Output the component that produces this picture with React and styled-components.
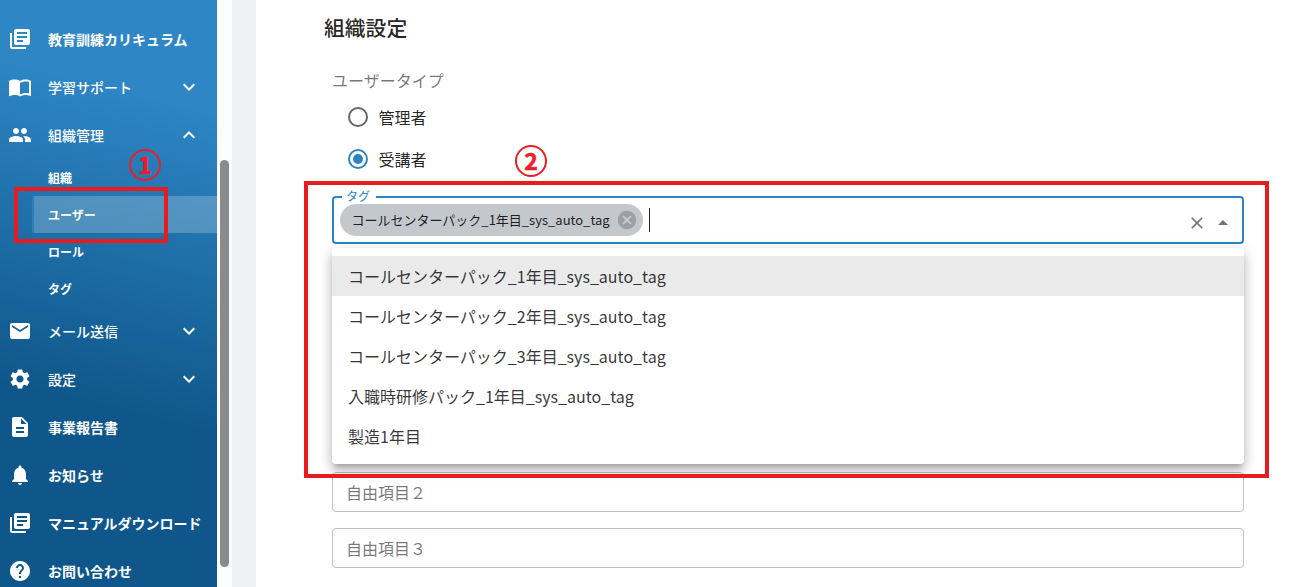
import React from 'react';
import styled, { createGlobalStyle, css } from 'styled-components';
import {
  MdLibraryBooks,
  MdImportContacts,
  MdPeople,
  MdEmail,
  MdSettings,
  MdDescription,
  MdNotifications,
  MdHelp,
  MdExpandMore,
  MdExpandLess,
  MdCancel,
  MdClose,
  MdArrowDropUp,
} from 'react-icons/md';

const BLUE = '#2d84c4';
const RED = '#e81c1e';

const GlobalStyle = createGlobalStyle`
  * { box-sizing: border-box; }
  body {
    margin: 0;
    overflow: hidden;
    background: #fff;
    font-family: "Noto Sans CJK JP", "Noto Sans", sans-serif;
    color: rgba(0, 0, 0, 0.87);
  }
  svg { display: block; flex-shrink: 0; }
`;

const Page = styled.div`
  position: relative;
  display: flex;
  height: 587px;
  overflow: hidden;
`;

const Sidebar = styled.nav`
  width: 217px;
  flex-shrink: 0;
  padding-top: 15px;
  overflow: hidden;
  color: #fff;
  background: linear-gradient(194deg, #2e86c5 17%, #0f578a 68%);
`;

const NavItem = styled.div`
  display: flex;
  align-items: center;
  height: 48px;
  padding: 0 16px 0 8px;
`;

const NavLabel = styled.span`
  flex: 1;
  margin-left: 16px;
  font-size: 14px;
  line-height: 20px;
  font-weight: ${(p) => (p.$bold ? 700 : 500)};
  white-space: nowrap;
`;

const SubItem = styled.div`
  display: flex;
  align-items: center;
  height: 37px;
  margin-left: 32px;
  padding-left: 14px;
  border-left: 2px solid transparent;
  font-size: 12px;
  line-height: 18px;
  font-weight: 700;
  ${(p) =>
    p.$selected &&
    css`
      border-left-color: #2a7fbf;
      background: rgba(255, 255, 255, 0.22);
      background-clip: padding-box;
    `}
`;

const ScrollTrack = styled.div`
  width: 15px;
  flex-shrink: 0;
  padding: 160px 3px 0;
  background: #fcfcfc;
`;

const ScrollThumb = styled.div`
  width: 9px;
  height: 407px;
  border-radius: 5px;
  background: #8b8b8b;
`;

const Gutter = styled.div`
  width: 24px;
  flex-shrink: 0;
  background: #eff0f2;
`;

const Main = styled.main`
  flex: 1;
  padding: 11px 67px 0 68px;
`;

const Title = styled.h2`
  margin: 0;
  height: 32px;
  font-size: 20.8px;
  line-height: 32px;
  font-weight: 500;
`;

const Form = styled.div`
  display: flex;
  flex-direction: column;
  padding-left: 8px;
`;

const GroupLabel = styled.div`
  margin-top: 25px;
  height: 24px;
  font-size: 16px;
  line-height: 24px;
  color: rgba(0, 0, 0, 0.55);
`;

const RadioRow = styled.label`
  display: flex;
  align-items: center;
  gap: 10.5px;
  height: 42px;
  padding-left: 16px;
  font-size: 16px;
  &:first-of-type { margin-top: 4px; }
`;

const RadioText = styled.span`
  line-height: 24px;
`;

const Radio = styled.span`
  display: flex;
  align-items: center;
  justify-content: center;
  width: 20px;
  height: 20px;
  border: 2px solid ${(p) => (p.$checked ? BLUE : '#666')};
  border-radius: 50%;
  &::after {
    content: '';
    width: 10px;
    height: 10px;
    border-radius: 50%;
    background: ${(p) => (p.$checked ? BLUE : 'transparent')};
  }
`;

const TagField = styled.div`
  position: relative;
  display: flex;
  align-items: center;
  height: 48px;
  margin-top: 16px;
  padding: 0 7px 0 6px;
  border: 2px solid ${BLUE};
  border-radius: 4px;
`;

const FloatingLabel = styled.span`
  position: absolute;
  top: -10px;
  left: 8px;
  padding: 0 6px 0 4px;
  background: #fff;
  color: ${BLUE};
  font-size: 12px;
  line-height: 16px;
`;

const Chip = styled.span`
  display: flex;
  align-items: center;
  height: 32px;
  padding: 0 5px 0 11.5px;
  border-radius: 16px;
  background: #c4c8cd;
  font-size: 13px;
  line-height: 20px;
  white-space: nowrap;
`;

const ChipText = styled.span`
  padding-bottom: 1px;
`;

const ChipIcon = styled.span`
  margin-left: 6.5px;
  color: #9d9fa3;
  background: radial-gradient(circle, #c9ccd0 50%, transparent 52%);
`;

const Caret = styled.span`
  width: 1px;
  height: 24px;
  margin-left: 6px;
  background: #222;
`;

const FieldActions = styled.span`
  display: flex;
  align-items: center;
  gap: 4px;
  margin-left: auto;
  padding-top: 6px;
  color: #757575;
`;

const Menu = styled.ul`
  position: absolute;
  top: 50px;
  left: -2px;
  right: -2px;
  z-index: 2;
  margin: 0;
  padding: 8px 0;
  list-style: none;
  border-radius: 4px;
  background: #fff;
  box-shadow:
    0 5px 5px -3px rgba(0, 0, 0, 0.2),
    0 8px 10px 1px rgba(0, 0, 0, 0.14),
    0 3px 14px 2px rgba(0, 0, 0, 0.12);
`;

const Option = styled.li`
  height: 40px;
  padding: 0 16px;
  font-size: 16px;
  line-height: 40px;
  color: rgba(0, 0, 0, 0.8);
  background: ${(p) => (p.$active ? '#eaeaea' : 'transparent')};
`;

const OptionText = styled.span`
  display: block;
  height: 38px;
  line-height: 38px;
  padding-top: 1px;
`;

const FreeFields = styled.div`
  display: flex;
  flex-direction: column;
  gap: 16px;
  margin-top: 228px;
`;

const TextField = styled.div`
  height: 40px;
  padding: 0 13px;
  border: 1px solid #c1c1c1;
  border-radius: 4px;
  font-size: 16px;
  line-height: 38px;
  color: rgba(0, 0, 0, 0.55);
`;

const Highlight = styled.div`
  position: absolute;
  z-index: 3;
  left: ${(p) => p.$x}px;
  top: ${(p) => p.$y}px;
  width: ${(p) => p.$w}px;
  height: ${(p) => p.$h}px;
  border: 4px solid ${RED};
`;

const StepBadge = styled.div`
  position: absolute;
  z-index: 3;
  left: ${(p) => p.$x}px;
  top: ${(p) => p.$y}px;
  display: flex;
  align-items: center;
  justify-content: center;
  width: 32px;
  height: 32px;
  padding-bottom: 3px;
  border: 2px solid #ee1c25;
  border-radius: 50%;
  color: #ee1c25;
  font: 700 23px/28px "Noto Sans CJK JP", sans-serif;
  -webkit-text-stroke: 0.6px #ee1c25;
`;

const primary = [
  { icon: MdLibraryBooks, label: '教育訓練カリキュラム', bold: true },
  { icon: MdImportContacts, label: '学習サポート', arrow: MdExpandMore },
  { icon: MdPeople, label: '組織管理', arrow: MdExpandLess },
];

const organization = ['組織', 'ユーザー', 'ロール', 'タグ'];

const secondary = [
  { icon: MdEmail, label: 'メール送信', arrow: MdExpandMore },
  { icon: MdSettings, label: '設定', arrow: MdExpandMore },
  { icon: MdDescription, label: '事業報告書', bold: true },
  { icon: MdNotifications, label: 'お知らせ', bold: true },
  { icon: MdLibraryBooks, label: 'マニュアルダウンロード', bold: true },
  { icon: MdHelp, label: 'お問い合わせ', bold: true },
];

const options = [
  'コールセンターパック_1年目_sys_auto_tag',
  'コールセンターパック_2年目_sys_auto_tag',
  'コールセンターパック_3年目_sys_auto_tag',
  '入職時研修パック_1年目_sys_auto_tag',
  '製造1年目',
];

function NavEntry({ icon: Icon, label, bold, arrow: Arrow }) {
  return (
    <NavItem>
      <Icon size={24} />
      <NavLabel $bold={bold}>{label}</NavLabel>
      {Arrow && <Arrow size={24} />}
    </NavItem>
  );
}

export default function App() {
  return (
    <Page>
      <GlobalStyle />
      <Sidebar>
        {primary.map((item) => (
          <NavEntry key={item.label} {...item} />
        ))}
        {organization.map((label) => (
          <SubItem key={label} $selected={label === 'ユーザー'}>
            {label}
          </SubItem>
        ))}
        {secondary.map((item) => (
          <NavEntry key={item.label} {...item} />
        ))}
      </Sidebar>
      <ScrollTrack>
        <ScrollThumb />
      </ScrollTrack>
      <Gutter />
      <Main>
        <Title>組織設定</Title>
        <Form>
          <GroupLabel>ユーザータイプ</GroupLabel>
          <RadioRow>
            <Radio />
            <RadioText>管理者</RadioText>
          </RadioRow>
          <RadioRow>
            <Radio $checked />
            <RadioText>受講者</RadioText>
          </RadioRow>
          <TagField>
            <FloatingLabel>タグ</FloatingLabel>
            <Chip>
              <ChipText>{options[0]}</ChipText>
              <ChipIcon>
                <MdCancel size={22} />
              </ChipIcon>
            </Chip>
            <Caret />
            <FieldActions>
              <MdClose size={20} />
              <MdArrowDropUp size={24} />
            </FieldActions>
            <Menu>
              {options.map((option, index) => (
                <Option key={option} $active={index === 0}>
                  <OptionText>{option}</OptionText>
                </Option>
              ))}
            </Menu>
          </TagField>
          <FreeFields>
            <TextField>自由項目２</TextField>
            <TextField>自由項目３</TextField>
          </FreeFields>
        </Form>
      </Main>
      <Highlight $x={14} $y={187} $w={154} $h={56} />
      <Highlight $x={304} $y={181} $w={965} $h={297} />
      <StepBadge $x={129} $y={149}>1</StepBadge>
      <StepBadge $x={515} $y={145}>2</StepBadge>
    </Page>
  );
}
